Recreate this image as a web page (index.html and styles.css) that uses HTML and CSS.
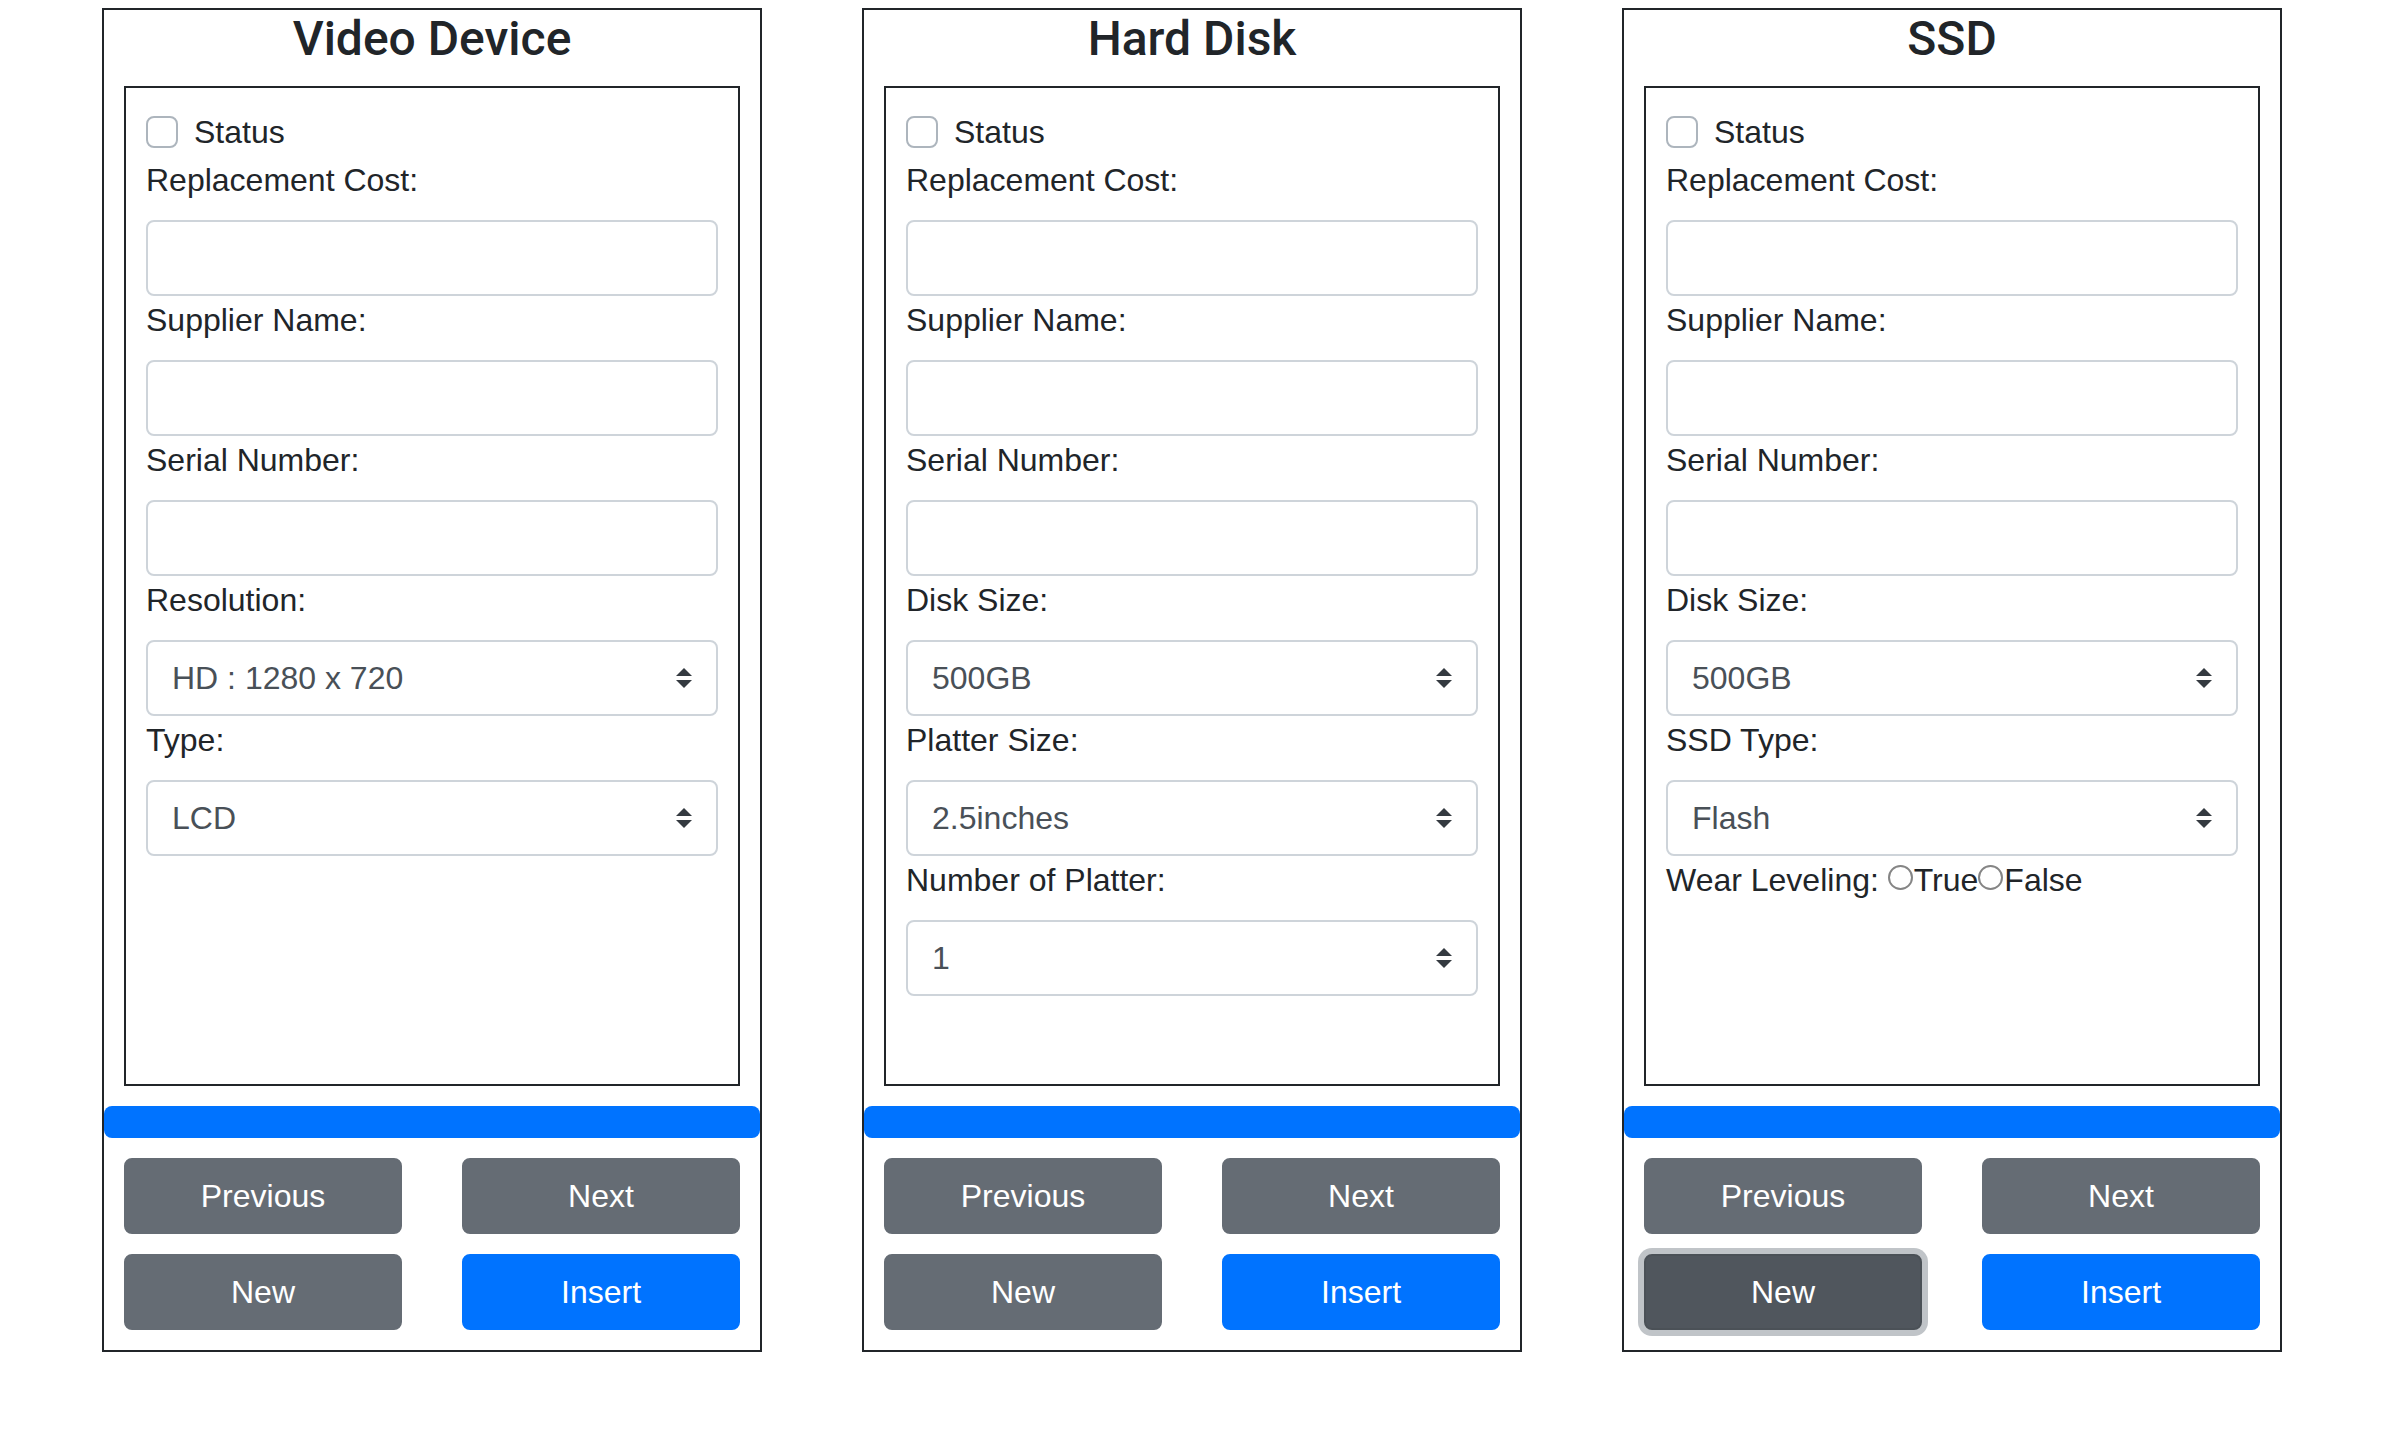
FILE: index.html
```html
<!DOCTYPE html>
<html lang="en">
<head>
<meta charset="utf-8">
<title>Devices</title>
<link rel="stylesheet" href="styles.css">
</head>
<body>
<main class="page">

  <section class="card">
    <h4 class="card-title">Video Device</h4>
    <div class="form-box">
      <div class="check-row"><span class="checkbox"></span><span>Status</span></div>
      <label class="label">Replacement Cost:</label>
      <div class="input"></div>
      <label class="label">Supplier Name:</label>
      <div class="input"></div>
      <label class="label">Serial Number:</label>
      <div class="input"></div>
      <label class="label">Resolution:</label>
      <div class="select"><span>HD : 1280 x 720</span><svg class="arrows" viewBox="0 0 4 5"><path d="M2 0L0 2h4zm0 5L0 3h4z"/></svg></div>
      <label class="label">Type:</label>
      <div class="select"><span>LCD</span><svg class="arrows" viewBox="0 0 4 5"><path d="M2 0L0 2h4zm0 5L0 3h4z"/></svg></div>
    </div>
    <div class="progress"></div>
    <div class="buttons">
      <button class="btn btn-secondary">Previous</button>
      <button class="btn btn-secondary">Next</button>
      <button class="btn btn-secondary">New</button>
      <button class="btn btn-primary">Insert</button>
    </div>
  </section>

  <section class="card">
    <h4 class="card-title">Hard Disk</h4>
    <div class="form-box">
      <div class="check-row"><span class="checkbox"></span><span>Status</span></div>
      <label class="label">Replacement Cost:</label>
      <div class="input"></div>
      <label class="label">Supplier Name:</label>
      <div class="input"></div>
      <label class="label">Serial Number:</label>
      <div class="input"></div>
      <label class="label">Disk Size:</label>
      <div class="select"><span>500GB</span><svg class="arrows" viewBox="0 0 4 5"><path d="M2 0L0 2h4zm0 5L0 3h4z"/></svg></div>
      <label class="label">Platter Size:</label>
      <div class="select"><span>2.5inches</span><svg class="arrows" viewBox="0 0 4 5"><path d="M2 0L0 2h4zm0 5L0 3h4z"/></svg></div>
      <label class="label">Number of Platter:</label>
      <div class="select"><span>1</span><svg class="arrows" viewBox="0 0 4 5"><path d="M2 0L0 2h4zm0 5L0 3h4z"/></svg></div>
    </div>
    <div class="progress"></div>
    <div class="buttons">
      <button class="btn btn-secondary">Previous</button>
      <button class="btn btn-secondary">Next</button>
      <button class="btn btn-secondary">New</button>
      <button class="btn btn-primary">Insert</button>
    </div>
  </section>

  <section class="card">
    <h4 class="card-title">SSD</h4>
    <div class="form-box">
      <div class="check-row"><span class="checkbox"></span><span>Status</span></div>
      <label class="label">Replacement Cost:</label>
      <div class="input"></div>
      <label class="label">Supplier Name:</label>
      <div class="input"></div>
      <label class="label">Serial Number:</label>
      <div class="input"></div>
      <label class="label">Disk Size:</label>
      <div class="select"><span>500GB</span><svg class="arrows" viewBox="0 0 4 5"><path d="M2 0L0 2h4zm0 5L0 3h4z"/></svg></div>
      <label class="label">SSD Type:</label>
      <div class="select"><span>Flash</span><svg class="arrows" viewBox="0 0 4 5"><path d="M2 0L0 2h4zm0 5L0 3h4z"/></svg></div>
      <div class="radio-row">Wear Leveling: <span class="radio"></span>True<span class="radio"></span>False</div>
    </div>
    <div class="progress"></div>
    <div class="buttons">
      <button class="btn btn-secondary">Previous</button>
      <button class="btn btn-secondary">Next</button>
      <button class="btn btn-secondary btn-focus">New</button>
      <button class="btn btn-primary">Insert</button>
    </div>
  </section>

</main>
</body>
</html>
```

FILE: styles.css
```css
* {
  box-sizing: border-box;
}

html, body {
  margin: 0;
  background: #ffffff;
}

body {
  font-family: "Liberation Sans", Arial, sans-serif;
  font-size: 32px;
  line-height: 48px;
  color: #212529;
}

.page {
  display: flex;
  justify-content: center;
  gap: 100px;
  padding: 8px 0 0 2px;
}

.card {
  width: 660px;
  border: 2px solid #212529;
  display: flex;
  flex-direction: column;
  padding-bottom: 20px;
}

.card-title {
  margin: 0;
  font-family: Roboto, "Liberation Sans", sans-serif;
  font-weight: 500;
  font-size: 48px;
  line-height: 58px;
  text-align: center;
  color: #212529;
}

.form-box {
  margin: 18px 20px 0;
  height: 1000px;
  border: 2px solid #212529;
  padding: 20px;
  display: flex;
  flex-direction: column;
}

.check-row {
  display: flex;
  align-items: flex-start;
  height: 48px;
}

.checkbox {
  width: 32px;
  height: 32px;
  margin-top: 8px;
  margin-right: 16px;
  border: 2px solid #adb5bd;
  border-radius: 8px;
  background: #fff;
  flex: none;
}

.label {
  display: block;
  height: 48px;
  margin-bottom: 16px;
}

.input,
.select {
  height: 76px;
  border: 2px solid #ced4da;
  border-radius: 8px;
  background: #fff;
  flex: none;
}

.select {
  display: flex;
  align-items: center;
  justify-content: space-between;
  padding: 0 24px 0 24px;
  color: #495057;
}

.arrows {
  width: 16px;
  height: 20px;
  fill: #343a40;
}

.radio-row {
  height: 48px;
  white-space: nowrap;
}

.radio {
  display: inline-block;
  width: 25px;
  height: 25px;
  margin: 0 1px 0 0;
  border: 2px solid #858585;
  border-radius: 50%;
  vertical-align: baseline;
  position: relative;
  top: -1px;
}

.progress {
  margin-top: 20px;
  height: 32px;
  border-radius: 8px;
  background: #0073ff;
}

.buttons {
  margin: 20px 20px 0;
  display: grid;
  grid-template-columns: 278px 278px;
  justify-content: space-between;
  row-gap: 20px;
}

.btn {
  height: 76px;
  border: 2px solid transparent;
  border-radius: 8px;
  font-family: "Liberation Sans", Arial, sans-serif;
  font-size: 32px;
  line-height: 48px;
  color: #ffffff;
  padding: 12px 24px;
  text-align: center;
}

.btn-secondary {
  background: #656c74;
  border-color: #656c74;
}

.btn-primary {
  background: #0073ff;
  border-color: #0073ff;
}

.btn-focus {
  background: #50565d;
  border-color: #4b5157;
  box-shadow: 0 0 0 6px rgba(130, 138, 145, 0.5);
}
```
